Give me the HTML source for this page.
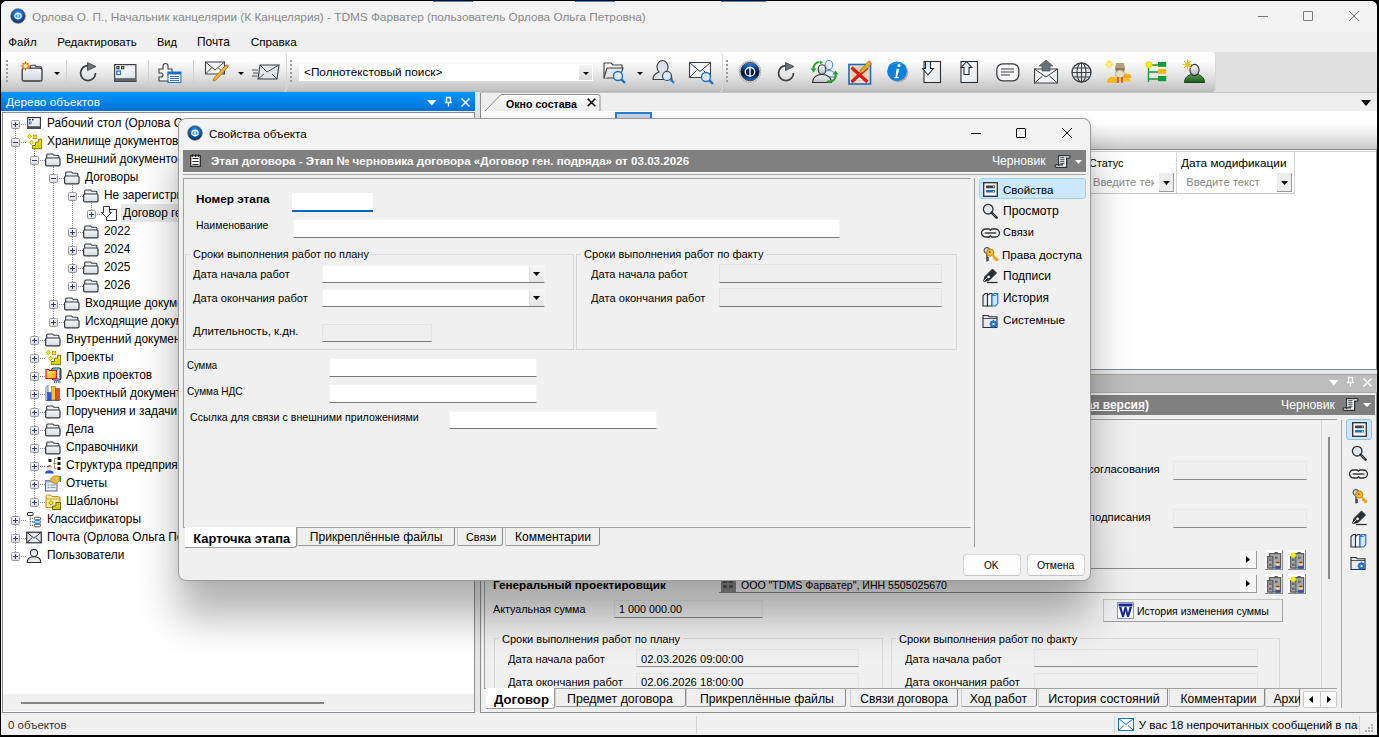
<!DOCTYPE html>
<html><head><meta charset="utf-8">
<style>
*{margin:0;padding:0;box-sizing:border-box}
html,body{width:1379px;height:737px;overflow:hidden;background:#000}
body{position:relative;font-family:"Liberation Sans",sans-serif;font-size:12px;color:#000}
.a{position:absolute}
.t{position:absolute;white-space:nowrap;line-height:14px;font-size:12px}
.b{font-weight:bold}
svg{position:absolute;overflow:visible}
</style></head><body>
<!-- window -->
<div class="a" style="left:1px;top:1px;width:1376px;height:734px;background:#f0f0f0;border-top-left-radius:6px;border-top-right-radius:6px;overflow:hidden">
</div>
<!-- title bar -->
<div class="a" style="left:1px;top:1px;width:1376px;height:31px;background:#f3f3f3;border-top-left-radius:6px;border-top-right-radius:6px"></div>
<svg style="left:10px;top:8px" width="16" height="16" viewBox="0 0 16 16"><defs><radialGradient id="gb" cx="50%" cy="40%" r="60%"><stop offset="0" stop-color="#4fb3ff"/><stop offset="0.6" stop-color="#0a5fb5"/><stop offset="1" stop-color="#041a3a"/></radialGradient></defs><circle cx="8" cy="8" r="7.3" fill="url(#gb)" stroke="#777" stroke-width="0.8"/><ellipse cx="8" cy="8" rx="3.2" ry="2.6" fill="none" stroke="#fff" stroke-width="1.1"/><line x1="8" y1="4.5" x2="8" y2="11.5" stroke="#fff" stroke-width="1.1"/></svg>
<div class="a" style="left:1258px;top:16px;width:10px;height:1px;background:#777"></div>
<div class="a" style="left:1303px;top:11px;width:10px;height:10px;border:1px solid #777;border-radius:1px"></div>
<svg style="left:1349px;top:11px" width="10" height="10"><path d="M0 0L10 10M10 0L0 10" stroke="#777" stroke-width="1"/></svg>
<div class="a" style="left:433px;top:1px;width:40px;height:1px;background:#4a86bc"></div>
<div class="a" style="left:575px;top:1px;width:40px;height:1px;background:#4a86bc"></div>
<div class="a" style="left:721px;top:1px;width:45px;height:1px;background:#4a86bc"></div>
<!-- menu -->
<!-- toolbar band -->
<div class="a" style="left:1px;top:52px;width:1376px;height:40px;background:#e1e1e1"></div>

<!-- toolbar groups -->
<div class="a" style="left:1px;top:52px;width:285px;height:40px;background:linear-gradient(#fff 0%,#fdfdfd 22%,#e4e4e4 60%,#c2c2c2 97%,#b0b0b0 100%);border-top-right-radius:3px;border-bottom-right-radius:3px"></div>
<div class="a" style="left:286px;top:52px;width:436px;height:40px;background:linear-gradient(#fff 0%,#fdfdfd 22%,#e4e4e4 60%,#c2c2c2 97%,#b0b0b0 100%);border-top-right-radius:3px;border-bottom-right-radius:3px"></div>
<div class="a" style="left:722px;top:52px;width:493px;height:40px;background:linear-gradient(#fff 0%,#fdfdfd 22%,#e4e4e4 60%,#c2c2c2 97%,#b0b0b0 100%);border-top-right-radius:3px;border-bottom-right-radius:3px"></div>
<div class="a" style="left:286px;top:54px;width:1px;height:36px;background:#d8d8d8"></div>
<div class="a" style="left:722px;top:54px;width:1px;height:36px;background:#d8d8d8"></div>
<div class="a" style="left:1215px;top:54px;width:1px;height:36px;background:#d8d8d8"></div>
<!-- grips -->
<svg style="left:6px;top:60px" width="3" height="24"><g fill="#9a9a9a"><rect x="0" y="0" width="2" height="2"/><rect x="0" y="4" width="2" height="2"/><rect x="0" y="8" width="2" height="2"/><rect x="0" y="12" width="2" height="2"/><rect x="0" y="16" width="2" height="2"/><rect x="0" y="20" width="2" height="2"/></g></svg>
<svg style="left:290px;top:60px" width="3" height="24"><g fill="#9a9a9a"><rect x="0" y="0" width="2" height="2"/><rect x="0" y="4" width="2" height="2"/><rect x="0" y="8" width="2" height="2"/><rect x="0" y="12" width="2" height="2"/><rect x="0" y="16" width="2" height="2"/><rect x="0" y="20" width="2" height="2"/></g></svg>
<svg style="left:726px;top:60px" width="3" height="24"><g fill="#9a9a9a"><rect x="0" y="0" width="2" height="2"/><rect x="0" y="4" width="2" height="2"/><rect x="0" y="8" width="2" height="2"/><rect x="0" y="12" width="2" height="2"/><rect x="0" y="16" width="2" height="2"/><rect x="0" y="20" width="2" height="2"/></g></svg>
<!-- separators -->
<div class="a" style="left:66px;top:60px;width:1px;height:26px;background:#d0d0d0"></div>
<div class="a" style="left:148px;top:60px;width:1px;height:26px;background:#d0d0d0"></div>
<div class="a" style="left:193px;top:60px;width:1px;height:26px;background:#d0d0d0"></div>
<!-- group1 icons -->
<svg style="left:21px;top:61px" width="22" height="21" viewBox="0 0 22 21"><defs><linearGradient id="nfg" x1="0" y1="0" x2="0" y2="1"><stop offset="0" stop-color="#f6f8fa"/><stop offset="1" stop-color="#d0d6de"/></linearGradient></defs><path d="M9.5 7.5V5.5a1.2 1.2 0 0 1 1.2-1.2h3.3l1.3 1.4h4.2a1.2 1.2 0 0 1 1.2 1.2V7.5" fill="#f4f6f8" stroke="#33383d" stroke-width="1.1"/><rect x="1.2" y="7.2" width="19.8" height="12.8" rx="1.6" fill="url(#nfg)" stroke="#33383d" stroke-width="1.3"/><circle cx="4.5" cy="5" r="3.4" fill="#f0a020"/><path d="M4.5 0.3v9.4M-0.2 5h9.4M1.2 1.7l6.6 6.6M7.8 1.7l-6.6 6.6" stroke="#e8501a" stroke-width="1"/><circle cx="4.5" cy="5" r="2.1" fill="#fff6a0"/></svg>
<svg style="left:54px;top:72px" width="6" height="3"><path d="M0 0h6l-3 3z" fill="#000"/></svg>
<svg style="left:79px;top:62px" width="20" height="20" viewBox="0 0 20 20"><path d="M16.5 11a7.5 7.5 0 1 1-7-7.4" fill="none" stroke="#3a3f44" stroke-width="1.7"/><path d="M8.5 0.5l8.5 4-8.5 4z" fill="#6b7178" stroke="#3a3f44" stroke-width="0.8"/></svg>
<svg style="left:114px;top:64px" width="23" height="18" viewBox="0 0 23 18"><defs><linearGradient id="wg" x1="0" y1="0" x2="1" y2="1"><stop offset="0" stop-color="#ffffff"/><stop offset="1" stop-color="#dfe3e8"/></linearGradient></defs><rect x="0.6" y="0.6" width="21.3" height="16.8" fill="url(#wg)" stroke="#3a3f44" stroke-width="1.2"/><rect x="0.6" y="14" width="21.3" height="3.4" fill="#5d6369"/><path d="M1.2 14.2h20" stroke="#9aa0a6" stroke-width="0.6"/><rect x="2.8" y="2.6" width="2.2" height="2.2" fill="none" stroke="#222" stroke-width="1"/><rect x="7.6" y="2.6" width="2.2" height="2.2" fill="none" stroke="#222" stroke-width="1"/><rect x="2.8" y="7" width="3.6" height="3.6" fill="#fff" stroke="#1a7ae0" stroke-width="1.3"/></svg>
<svg style="left:158px;top:61px" width="24" height="22" viewBox="0 0 24 22"><path d="M1 8h4v-3a2.5 2.5 0 0 1 5 0v3h4v4h-2a2 2 0 0 0 0 4h2v4h-13v-4h2a2 2 0 0 0 0-4h-2z" fill="#f0f2f4" stroke="#3a3f44" stroke-width="1.1"/><rect x="10" y="11" width="13" height="10.5" fill="#fff" stroke="#1b6fc7"/><rect x="10" y="11" width="13" height="2.5" fill="#1b6fc7"/><path d="M12 15.5h9M12 17.5h9M12 19.5h9" stroke="#1b6fc7" stroke-width="0.9"/></svg>
<svg style="left:205px;top:61px" width="24" height="22" viewBox="0 0 24 22"><path d="M0.5 1h19v12h-19z" fill="#f4f5f6" stroke="#3a3f44" stroke-width="1.1"/><path d="M0.5 1l9.5 8 9.5-8M0.5 13l6-6M19.5 13l-6-6" fill="none" stroke="#3a3f44" stroke-width="1"/><path d="M21 4l2 2-12 13-3 1 1-3z" fill="#f2b429" stroke="#a26a10" stroke-width="0.7"/><path d="M21 4l2 2 1-1-2-2z" fill="#e8709a"/></svg>
<svg style="left:238px;top:72px" width="6" height="3"><path d="M0 0h6l-3 3z" fill="#000"/></svg>
<svg style="left:252px;top:64px" width="28" height="16" viewBox="0 0 28 16"><path d="M8 1h19l-2 14h-19z" fill="#e1e6ec" stroke="#3a3f44" stroke-width="1.1"/><path d="M8 1l7 7 12-7M6 15l6-5M25 15l-5-5" fill="none" stroke="#3a3f44" stroke-width="0.9"/><path d="M0 6h6M1 9h5M0 12h5" stroke="#3a3f44" stroke-width="0.9"/></svg>
<!-- search combo -->
<div class="a" style="left:299px;top:64px;width:294px;height:17px;background:#fff"></div>
<div class="a" style="left:579px;top:65px;width:13px;height:15px;background:linear-gradient(#f4f4f4,#d6d6d6);"></div>
<svg style="left:583px;top:72px" width="6" height="3"><path d="M0 0h6l-3 3z" fill="#000"/></svg>
<!-- group2 icons -->
<svg style="left:603px;top:61px" width="26" height="22" viewBox="0 0 26 22"><path d="M1 2h7l2 2h9v3M1 2v15h10" fill="none" stroke="#3a3f44" stroke-width="1.1"/><path d="M1 17l3-10h16l-2 6" fill="#e1e6ec" stroke="#3a3f44" stroke-width="1.1"/><circle cx="15" cy="15" r="4.5" fill="#dfe6ee" stroke="#1a72c8" stroke-width="1.3"/><path d="M18.2 18.2l3.8 3.8" stroke="#1a72c8" stroke-width="2.4"/></svg>
<svg style="left:637px;top:72px" width="6" height="3"><path d="M0 0h6l-3 3z" fill="#000"/></svg>
<svg style="left:652px;top:60px" width="24" height="24" viewBox="0 0 24 24"><path d="M1 19.5c0-4 3-6.5 6-7.5a5.5 6.5 0 1 1 7 0c3 1 6 3.5 6 7.5z" fill="#dde2e8" stroke="#3a3f44" stroke-width="1.1"/><circle cx="15" cy="16" r="4.5" fill="#d7ecfb" stroke="#3a3f44" stroke-width="1.2"/><path d="M18 19l4 4" stroke="#1a7ae0" stroke-width="2.2"/></svg>
<svg style="left:689px;top:62px" width="26" height="22" viewBox="0 0 26 22"><path d="M0.5 0.5h21v15h-21z" fill="#f4f5f6" stroke="#3a3f44" stroke-width="1.1"/><path d="M0.5 0.5l10.5 9 10.5-9M0.5 15.5l7-7M21.5 15.5l-7-7" fill="none" stroke="#3a3f44" stroke-width="1"/><circle cx="17" cy="15" r="4.5" fill="#dfe6ee" stroke="#1a72c8" stroke-width="1.3"/><path d="M20.2 18.2l3.8 3.8" stroke="#1a72c8" stroke-width="2.4"/></svg>
<!-- group3 icons -->
<svg style="left:738px;top:60px" width="24" height="24" viewBox="0 0 24 24"><defs><linearGradient id="gb3" x1="0" y1="0" x2="0" y2="1"><stop offset="0" stop-color="#2a8ae8"/><stop offset="0.35" stop-color="#0a3a80"/><stop offset="0.6" stop-color="#020a20"/><stop offset="1" stop-color="#1a70d0"/></linearGradient></defs><circle cx="12" cy="11.6" r="10.8" fill="#d8d8d8" stroke="#8a8a8a" stroke-width="0.8" stroke-dasharray="1.5 1"/><circle cx="12" cy="11.6" r="9.2" fill="url(#gb3)" stroke="#303030" stroke-width="0.8"/><ellipse cx="12" cy="11.8" rx="4.8" ry="4.3" fill="none" stroke="#e8eef4" stroke-width="1.4"/><line x1="12" y1="6.5" x2="12" y2="17" stroke="#e8eef4" stroke-width="1.5"/></svg>
<svg style="left:777px;top:62px" width="20" height="20" viewBox="0 0 20 20"><path d="M16.5 11a7.5 7.5 0 1 1-7-7.4" fill="none" stroke="#3a3f44" stroke-width="1.7"/><path d="M8.5 0.5l8.5 4-8.5 4z" fill="#6b7178" stroke="#3a3f44" stroke-width="0.8"/></svg>
<svg style="left:810px;top:59px" width="27" height="26" viewBox="0 0 27 26"><defs><linearGradient id="ug2" x1="0" y1="0" x2="0" y2="1"><stop offset="0" stop-color="#f4f6f8"/><stop offset="1" stop-color="#b8c0c8"/></linearGradient></defs><ellipse cx="19" cy="6" rx="3.8" ry="4.6" fill="#e8f0fa" stroke="#3a80d0" stroke-width="1"/><path d="M13 18c0-4 3-6.5 6-6.5s7 2.5 7 6.5z" fill="#e8f0fa" stroke="#3a80d0" stroke-width="1"/><ellipse cx="12" cy="10.5" rx="3.8" ry="4.8" fill="url(#ug2)" stroke="#2a2f33" stroke-width="1.1"/><path d="M2.5 23.5c0-5 4-8 9.5-8s9.5 3 9.5 8z" fill="url(#ug2)" stroke="#2a2f33" stroke-width="1.1"/><path d="M3.5 10.5a6.5 6.5 0 0 1 6-7.5" fill="none" stroke="#2aa02a" stroke-width="2"/><path d="M0.5 9.5h6l-3 4z" fill="#2aa02a"/><path d="M10 1.5l3 2-3 2z" fill="#2aa02a"/><path d="M25.5 15a6.5 6.5 0 0 1-6 8" fill="none" stroke="#2aa02a" stroke-width="2"/><path d="M22.5 15.5h6l-3-4z" fill="#2aa02a"/><path d="M19.5 24.5l-3-2 3-2z" fill="#2aa02a"/></svg>
<svg style="left:848px;top:60px" width="24" height="25" viewBox="0 0 24 25"><rect x="1" y="4.5" width="21.5" height="19.5" fill="#e8e0c0" stroke="#1a6ac0" stroke-width="1.6"/><rect x="4" y="7" width="15.5" height="14" fill="#d8d0b0"/><path d="M8 16h8v4h-8z" fill="#fff" opacity="0.7"/><path d="M3.5 7.5l16 14.5M19.5 7.5l-16 14.5" stroke="#e01818" stroke-width="3.2"/><path d="M20.5 1l3 3-8.5 8.5-3.5 1 1-3.5z" fill="#f2a828" stroke="#7a5010" stroke-width="0.6"/><path d="M20.5 1l3 3 0.8-0.8-3-3z" fill="#e87aa0"/></svg>
<svg style="left:886px;top:60px" width="24" height="24" viewBox="0 0 24 24"><circle cx="12.3" cy="12.3" r="10" fill="#6a6a6a" opacity="0.5"/><circle cx="11" cy="11.3" r="9.8" fill="#0a80dc"/><path d="M6 5a8 6 0 0 1 10-1" fill="none" stroke="#5ab0f0" stroke-width="1" opacity="0.6"/><circle cx="13" cy="5.6" r="1.5" fill="#fff"/><path d="M10.5 8.8h3l-2.4 8.2h1.8l-0.4 1.3h-4.4l0.4-1.3h1z" fill="#fff"/></svg>
<svg style="left:922px;top:61px" width="20" height="22" viewBox="0 0 20 22"><defs><linearGradient id="dg2" x1="0" y1="0" x2="1" y2="1"><stop offset="0" stop-color="#ffffff"/><stop offset="1" stop-color="#e4e6e8"/></linearGradient><linearGradient id="ag" x1="0" y1="0" x2="0" y2="1"><stop offset="0" stop-color="#d0e4fa"/><stop offset="1" stop-color="#ffffff"/></linearGradient></defs><rect x="2" y="0.5" width="16.5" height="21" fill="url(#dg2)" stroke="#2a2f33" stroke-width="1.1"/><path d="M3.5 0.5v7h-2.8l5.3 6.5 5.3-6.5h-2.8v-7z" fill="url(#ag)" stroke="#2a2f33" stroke-width="1.1"/></svg>
<svg style="left:960px;top:61px" width="20" height="22" viewBox="0 0 20 22"><rect x="1" y="0.5" width="16.5" height="21" fill="url(#dg2)" stroke="#2a2f33" stroke-width="1.1"/><path d="M4 13.5v-7h-2.8l5.3-6 5.3 6h-2.8v7z" fill="url(#ag)" stroke="#2a2f33" stroke-width="1.1"/></svg>
<svg style="left:996px;top:63px" width="24" height="19" viewBox="0 0 24 19"><rect x="0.8" y="0.8" width="22" height="17" rx="6" fill="#f9f9f9" stroke="#3a3f44" stroke-width="1.3"/><path d="M5 6h13M5 9h13M5 12h9" stroke="#3a3f44" stroke-width="1.1"/></svg>
<svg style="left:1034px;top:60px" width="24" height="24" viewBox="0 0 24 24"><path d="M0.5 9h23v14h-23z" fill="#f4f5f6" stroke="#3a3f44" stroke-width="1.1"/><path d="M0.5 9l11.5 8 11.5-8M0.5 23l8-7M23.5 23l-8-7" fill="none" stroke="#3a3f44" stroke-width="1"/><path d="M8 11v-5h-3l7-6 7 6h-3v5z" fill="#6b7178" stroke="#3a3f44" stroke-width="0.6"/></svg>
<svg style="left:1071px;top:62px" width="21" height="21" viewBox="0 0 21 21"><circle cx="10.5" cy="10.5" r="9.5" fill="none" stroke="#3a3f44" stroke-width="1.3"/><ellipse cx="10.5" cy="10.5" rx="4.5" ry="9.5" fill="none" stroke="#3a3f44" stroke-width="1.1"/><path d="M1 10.5h19M2.5 6h16M2.5 15h16M10.5 1v19" stroke="#3a3f44" stroke-width="1.1"/></svg>
<svg style="left:1106px;top:59px" width="28" height="26" viewBox="0 0 28 26"><path d="M1 22c1-4 5-5 8-4s4 4 3 6h-11z" fill="#f8b820"/><path d="M13 21c1-3 4-4 7-3.5s5 3 4 5h-11z" fill="#f8c030"/><path d="M17 17c1-3 4-3 6-2s3 3 2 4h-8z" fill="#f8a818"/><path d="M9 9h10l-1 4h-8z" fill="#8a7a5a"/><path d="M10 4h8l1 5h-10z" fill="#b0a080"/><ellipse cx="14" cy="15" rx="4.5" ry="4" fill="#e8dcc0" stroke="#9a8a6a" stroke-width="0.6"/><path d="M12 18v6M16 18v6" stroke="#d02020" stroke-width="1.2"/><path d="M3 1v9M-0.5 5.5h8M0.5 2.5l5 5M5.5 2.5l-5 5" stroke="#f8e020" stroke-width="1.3"/><circle cx="3" cy="5.5" r="1.8" fill="#fff8a0"/></svg>
<svg style="left:1144px;top:60px" width="24" height="24" viewBox="0 0 24 24"><path d="M4.5 5v17M4.5 5h10M4.5 12h10M4.5 19h10" stroke="#1a9a2a" stroke-width="1.4" fill="none"/><circle cx="5" cy="4.8" r="3.3" fill="#f6ea10" stroke="#d0c000" stroke-width="0.5"/><rect x="14" y="2" width="8.2" height="4.8" fill="#109a3a"/><rect x="14" y="9" width="8.2" height="4.8" fill="#f0b818"/><rect x="14" y="16" width="8.2" height="5.2" fill="#109a3a"/></svg>
<svg style="left:1182px;top:59px" width="26" height="25" viewBox="0 0 26 25"><defs><linearGradient id="pg1" x1="0" y1="0" x2="0" y2="1"><stop offset="0" stop-color="#fafbfc"/><stop offset="1" stop-color="#aeb4ba"/></linearGradient><linearGradient id="pg2" x1="0" y1="0" x2="0" y2="1"><stop offset="0" stop-color="#5aa05a"/><stop offset="1" stop-color="#1a5a1a"/></linearGradient></defs><path d="M2.5 23.5c0-5 4-8.5 10-8.5s10 3.5 10 8.5z" fill="url(#pg2)" stroke="#1a3a1a" stroke-width="1"/><ellipse cx="12.5" cy="11" rx="4.6" ry="5.6" fill="url(#pg1)" stroke="#2a2f33" stroke-width="1.1"/><circle cx="5.5" cy="5.5" r="2.6" fill="#f8d820"/><path d="M5.5 0.5v10M0.5 5.5h10M2 2l7 7M9 2l-7 7" stroke="#f0c010" stroke-width="1"/></svg>

<div class="t" style="left:32px;top:9.7px;font-size:11.79px;color:#8a8a8a">Орлова О. П., Начальник канцелярии (К Канцелярия) - TDMS Фарватер (пользователь Орлова Ольга Петровна)</div>
<div class="t" style="left:8.3px;top:34.7px;font-size:11.55px">Файл</div>
<div class="t" style="left:57.3px;top:34.7px;font-size:11.49px">Редактировать</div>
<div class="t" style="left:157px;top:34.7px;font-size:11.2px;transform:scaleX(0.987);transform-origin:0 50%">Вид</div>
<div class="t" style="left:197px;top:34.7px;font-size:11.88px">Почта</div>
<div class="t" style="left:250.7px;top:34.7px;font-size:11.73px">Справка</div>
<div class="t" style="left:304px;top:65.3px;font-size:11.8px">&lt;Полнотекстовый поиск&gt;</div>
<div class="a" style="left:1px;top:92px;width:474px;height:19px;background:linear-gradient(#0096fc,#0084ea 50%,#0070d2)"></div>
<svg style="left:427px;top:100px" width="10" height="6"><path d="M0 0h9.5l-4.75 5.5z" fill="#fff"/></svg>
<svg style="left:444px;top:97px" width="9" height="10"><path d="M2 0.5h5M2.5 0.5v5M6.5 0.5v5M1 5.5h7M4.5 5.5v4" stroke="#fff" stroke-width="1.3" fill="none"/></svg>
<svg style="left:461px;top:98px" width="9" height="9"><path d="M0.5 0.5l8 8M8.5 0.5l-8 8" stroke="#fff" stroke-width="1.5"/></svg>
<div class="a" style="left:2px;top:112px;width:473px;height:601px;background:#fff;border:1px solid #8a8f96"></div>
<div class="a" style="left:3px;top:694px;width:471px;height:17px;background:#f0f0f0"></div>
<div class="a" style="left:21px;top:702px;width:303px;height:2px;background:#858585"></div>
<svg style="left:0;top:0" width="1" height="1"><defs><linearGradient id="fg" x1="0" y1="0" x2="0" y2="1"><stop offset="0" stop-color="#f7f8fa"/><stop offset="1" stop-color="#d5dae0"/></linearGradient><linearGradient id="dg" x1="0" y1="0" x2="1" y2="1"><stop offset="0" stop-color="#ffffff"/><stop offset="1" stop-color="#dde2e8"/></linearGradient><linearGradient id="yg" x1="0" y1="0" x2="1" y2="1"><stop offset="0" stop-color="#fff8c0"/><stop offset="0.5" stop-color="#f8d040"/><stop offset="1" stop-color="#f0a000"/></linearGradient><linearGradient id="ug" x1="0" y1="0" x2="0" y2="1"><stop offset="0" stop-color="#d8dce0"/><stop offset="1" stop-color="#f4f5f6"/></linearGradient><linearGradient id="bg9" x1="0" y1="0" x2="0" y2="1"><stop offset="0" stop-color="#fff"/><stop offset="1" stop-color="#d8d8d8"/></linearGradient></defs></svg>
<div class="a" style="left:15px;top:129px;width:1px;height:427px;background:repeating-linear-gradient(#8a8a8a 0 1px,transparent 1px 2px)"></div>
<div class="a" style="left:34px;top:147px;width:1px;height:355px;background:repeating-linear-gradient(#8a8a8a 0 1px,transparent 1px 2px)"></div>
<div class="a" style="left:53px;top:165px;width:1px;height:157px;background:repeating-linear-gradient(#8a8a8a 0 1px,transparent 1px 2px)"></div>
<div class="a" style="left:72px;top:183px;width:1px;height:103px;background:repeating-linear-gradient(#8a8a8a 0 1px,transparent 1px 2px)"></div>
<div class="a" style="left:91px;top:201px;width:1px;height:13px;background:repeating-linear-gradient(#8a8a8a 0 1px,transparent 1px 2px)"></div>
<div class="a" style="left:121px;top:204px;width:120px;height:18px;background:#e8e8e8"></div>
<div class="a" style="left:21px;top:124px;width:6px;height:1px;background:repeating-linear-gradient(90deg,#8a8a8a 0 1px,transparent 1px 2px)"></div>
<svg style="left:11px;top:120px" width="9" height="9"><rect x="0.5" y="0.5" width="8" height="8" rx="1" fill="url(#bg9)" stroke="#9a9a9a"/><path d="M2 4.5h5" stroke="#2a3a8a" stroke-width="1"/><path d="M4.5 2v5" stroke="#2a3a8a" stroke-width="1"/></svg>
<svg style="left:26px;top:116px" width="16" height="16" viewBox="0 0 16 16"><rect x="1.7" y="1.5" width="12.7" height="10.8" fill="url(#dg)" stroke="#2e3338" stroke-width="1.1"/><rect x="1.7" y="10.3" width="12.7" height="2" fill="#3a3f44"/><path d="M2.5 11.1h11" stroke="#7a7f84" stroke-width="0.5"/><rect x="3" y="2.8" width="1.6" height="1.6" fill="#111"/><rect x="6" y="2.8" width="1.6" height="1.6" fill="#111"/><rect x="3" y="5.6" width="2.6" height="2.6" fill="#1a7ae0"/><rect x="3.9" y="6.5" width="0.9" height="0.9" fill="#fff"/></svg>
<div class="a" style="left:21px;top:142px;width:6px;height:1px;background:repeating-linear-gradient(90deg,#8a8a8a 0 1px,transparent 1px 2px)"></div>
<svg style="left:11px;top:138px" width="9" height="9"><rect x="0.5" y="0.5" width="8" height="8" rx="1" fill="url(#bg9)" stroke="#9a9a9a"/><path d="M2 4.5h5" stroke="#2a3a8a" stroke-width="1"/></svg>
<svg style="left:26px;top:134px" width="16" height="16" viewBox="0 0 16 16"><path d="M3.4 0.3l2.2 2.2-2.2 2.2-2.2-2.2z" fill="#f6ee00" stroke="#8a8400" stroke-width="0.6"/><rect x="7.5" y="1.2" width="3.2" height="3.4" fill="#f6ee00" stroke="#d08a00" stroke-width="0.8"/><path d="M5.5 6.2l2.2 2.2-2.2 2.2-2.2-2.2z" fill="#f6ee00" stroke="#8a8400" stroke-width="0.6"/><path d="M6.4 14.7V11.5H9.5V8.2H12.6V5.2H15.6V14.7Z" fill="#f6ee00" stroke="#6a6400" stroke-width="0.9"/><path d="M6.5 13.1h9M9.5 11.5h6M12.6 9.8h3M9.5 11.5v3.2M12.6 8.2v6.5" stroke="#b0a800" stroke-width="0.5"/></svg>
<div class="a" style="left:40px;top:160px;width:6px;height:1px;background:repeating-linear-gradient(90deg,#8a8a8a 0 1px,transparent 1px 2px)"></div>
<svg style="left:30px;top:156px" width="9" height="9"><rect x="0.5" y="0.5" width="8" height="8" rx="1" fill="url(#bg9)" stroke="#9a9a9a"/><path d="M2 4.5h5" stroke="#2a3a8a" stroke-width="1"/></svg>
<svg style="left:45px;top:152px" width="16" height="16" viewBox="0 0 16 16"><path d="M1.7 6.5V3a1 1 0 0 1 1-1h5l1.2 1.3h4a1 1 0 0 1 1 1V6.5" fill="#eef1f4" stroke="#33383d" stroke-width="1.1"/><rect x="0.6" y="6" width="14.4" height="7.8" rx="1.3" fill="url(#fg)" stroke="#33383d" stroke-width="1.2"/></svg>
<div class="a" style="left:59px;top:178px;width:6px;height:1px;background:repeating-linear-gradient(90deg,#8a8a8a 0 1px,transparent 1px 2px)"></div>
<svg style="left:49px;top:174px" width="9" height="9"><rect x="0.5" y="0.5" width="8" height="8" rx="1" fill="url(#bg9)" stroke="#9a9a9a"/><path d="M2 4.5h5" stroke="#2a3a8a" stroke-width="1"/></svg>
<svg style="left:64px;top:170px" width="16" height="16" viewBox="0 0 16 16"><path d="M1.7 6.5V3a1 1 0 0 1 1-1h5l1.2 1.3h4a1 1 0 0 1 1 1V6.5" fill="#eef1f4" stroke="#33383d" stroke-width="1.1"/><rect x="0.6" y="6" width="14.4" height="7.8" rx="1.3" fill="url(#fg)" stroke="#33383d" stroke-width="1.2"/></svg>
<div class="a" style="left:78px;top:196px;width:6px;height:1px;background:repeating-linear-gradient(90deg,#8a8a8a 0 1px,transparent 1px 2px)"></div>
<svg style="left:68px;top:192px" width="9" height="9"><rect x="0.5" y="0.5" width="8" height="8" rx="1" fill="url(#bg9)" stroke="#9a9a9a"/><path d="M2 4.5h5" stroke="#2a3a8a" stroke-width="1"/></svg>
<svg style="left:83px;top:188px" width="16" height="16" viewBox="0 0 16 16"><path d="M1.7 6.5V3a1 1 0 0 1 1-1h5l1.2 1.3h4a1 1 0 0 1 1 1V6.5" fill="#eef1f4" stroke="#33383d" stroke-width="1.1"/><rect x="0.6" y="6" width="14.4" height="7.8" rx="1.3" fill="url(#fg)" stroke="#33383d" stroke-width="1.2"/></svg>
<div class="a" style="left:97px;top:214px;width:6px;height:1px;background:repeating-linear-gradient(90deg,#8a8a8a 0 1px,transparent 1px 2px)"></div>
<svg style="left:87px;top:210px" width="9" height="9"><rect x="0.5" y="0.5" width="8" height="8" rx="1" fill="url(#bg9)" stroke="#9a9a9a"/><path d="M2 4.5h5" stroke="#2a3a8a" stroke-width="1"/><path d="M4.5 2v5" stroke="#2a3a8a" stroke-width="1"/></svg>
<svg style="left:102px;top:206px" width="16" height="16" viewBox="0 0 16 16"><path d="M4.5 3.5h10v11h-10z" fill="#fff" stroke="#2e3338"/><path d="M1.5 0.5h6v6h2l-5 5-5-5h2z" fill="#fff" stroke="#2e3338"/></svg>
<div class="a" style="left:78px;top:232px;width:6px;height:1px;background:repeating-linear-gradient(90deg,#8a8a8a 0 1px,transparent 1px 2px)"></div>
<svg style="left:68px;top:228px" width="9" height="9"><rect x="0.5" y="0.5" width="8" height="8" rx="1" fill="url(#bg9)" stroke="#9a9a9a"/><path d="M2 4.5h5" stroke="#2a3a8a" stroke-width="1"/><path d="M4.5 2v5" stroke="#2a3a8a" stroke-width="1"/></svg>
<svg style="left:83px;top:224px" width="16" height="16" viewBox="0 0 16 16"><path d="M1.7 6.5V3a1 1 0 0 1 1-1h5l1.2 1.3h4a1 1 0 0 1 1 1V6.5" fill="#eef1f4" stroke="#33383d" stroke-width="1.1"/><rect x="0.6" y="6" width="14.4" height="7.8" rx="1.3" fill="url(#fg)" stroke="#33383d" stroke-width="1.2"/></svg>
<div class="a" style="left:78px;top:250px;width:6px;height:1px;background:repeating-linear-gradient(90deg,#8a8a8a 0 1px,transparent 1px 2px)"></div>
<svg style="left:68px;top:246px" width="9" height="9"><rect x="0.5" y="0.5" width="8" height="8" rx="1" fill="url(#bg9)" stroke="#9a9a9a"/><path d="M2 4.5h5" stroke="#2a3a8a" stroke-width="1"/><path d="M4.5 2v5" stroke="#2a3a8a" stroke-width="1"/></svg>
<svg style="left:83px;top:242px" width="16" height="16" viewBox="0 0 16 16"><path d="M1.7 6.5V3a1 1 0 0 1 1-1h5l1.2 1.3h4a1 1 0 0 1 1 1V6.5" fill="#eef1f4" stroke="#33383d" stroke-width="1.1"/><rect x="0.6" y="6" width="14.4" height="7.8" rx="1.3" fill="url(#fg)" stroke="#33383d" stroke-width="1.2"/></svg>
<div class="a" style="left:78px;top:268px;width:6px;height:1px;background:repeating-linear-gradient(90deg,#8a8a8a 0 1px,transparent 1px 2px)"></div>
<svg style="left:68px;top:264px" width="9" height="9"><rect x="0.5" y="0.5" width="8" height="8" rx="1" fill="url(#bg9)" stroke="#9a9a9a"/><path d="M2 4.5h5" stroke="#2a3a8a" stroke-width="1"/><path d="M4.5 2v5" stroke="#2a3a8a" stroke-width="1"/></svg>
<svg style="left:83px;top:260px" width="16" height="16" viewBox="0 0 16 16"><path d="M1.7 6.5V3a1 1 0 0 1 1-1h5l1.2 1.3h4a1 1 0 0 1 1 1V6.5" fill="#eef1f4" stroke="#33383d" stroke-width="1.1"/><rect x="0.6" y="6" width="14.4" height="7.8" rx="1.3" fill="url(#fg)" stroke="#33383d" stroke-width="1.2"/></svg>
<div class="a" style="left:78px;top:286px;width:6px;height:1px;background:repeating-linear-gradient(90deg,#8a8a8a 0 1px,transparent 1px 2px)"></div>
<svg style="left:68px;top:282px" width="9" height="9"><rect x="0.5" y="0.5" width="8" height="8" rx="1" fill="url(#bg9)" stroke="#9a9a9a"/><path d="M2 4.5h5" stroke="#2a3a8a" stroke-width="1"/><path d="M4.5 2v5" stroke="#2a3a8a" stroke-width="1"/></svg>
<svg style="left:83px;top:278px" width="16" height="16" viewBox="0 0 16 16"><path d="M1.7 6.5V3a1 1 0 0 1 1-1h5l1.2 1.3h4a1 1 0 0 1 1 1V6.5" fill="#eef1f4" stroke="#33383d" stroke-width="1.1"/><rect x="0.6" y="6" width="14.4" height="7.8" rx="1.3" fill="url(#fg)" stroke="#33383d" stroke-width="1.2"/></svg>
<div class="a" style="left:59px;top:304px;width:6px;height:1px;background:repeating-linear-gradient(90deg,#8a8a8a 0 1px,transparent 1px 2px)"></div>
<svg style="left:49px;top:300px" width="9" height="9"><rect x="0.5" y="0.5" width="8" height="8" rx="1" fill="url(#bg9)" stroke="#9a9a9a"/><path d="M2 4.5h5" stroke="#2a3a8a" stroke-width="1"/><path d="M4.5 2v5" stroke="#2a3a8a" stroke-width="1"/></svg>
<svg style="left:64px;top:296px" width="16" height="16" viewBox="0 0 16 16"><path d="M1.7 6.5V3a1 1 0 0 1 1-1h5l1.2 1.3h4a1 1 0 0 1 1 1V6.5" fill="#eef1f4" stroke="#33383d" stroke-width="1.1"/><rect x="0.6" y="6" width="14.4" height="7.8" rx="1.3" fill="url(#fg)" stroke="#33383d" stroke-width="1.2"/></svg>
<div class="a" style="left:59px;top:322px;width:6px;height:1px;background:repeating-linear-gradient(90deg,#8a8a8a 0 1px,transparent 1px 2px)"></div>
<svg style="left:49px;top:318px" width="9" height="9"><rect x="0.5" y="0.5" width="8" height="8" rx="1" fill="url(#bg9)" stroke="#9a9a9a"/><path d="M2 4.5h5" stroke="#2a3a8a" stroke-width="1"/><path d="M4.5 2v5" stroke="#2a3a8a" stroke-width="1"/></svg>
<svg style="left:64px;top:314px" width="16" height="16" viewBox="0 0 16 16"><path d="M1.7 6.5V3a1 1 0 0 1 1-1h5l1.2 1.3h4a1 1 0 0 1 1 1V6.5" fill="#eef1f4" stroke="#33383d" stroke-width="1.1"/><rect x="0.6" y="6" width="14.4" height="7.8" rx="1.3" fill="url(#fg)" stroke="#33383d" stroke-width="1.2"/></svg>
<div class="a" style="left:40px;top:340px;width:6px;height:1px;background:repeating-linear-gradient(90deg,#8a8a8a 0 1px,transparent 1px 2px)"></div>
<svg style="left:30px;top:336px" width="9" height="9"><rect x="0.5" y="0.5" width="8" height="8" rx="1" fill="url(#bg9)" stroke="#9a9a9a"/><path d="M2 4.5h5" stroke="#2a3a8a" stroke-width="1"/><path d="M4.5 2v5" stroke="#2a3a8a" stroke-width="1"/></svg>
<svg style="left:45px;top:332px" width="16" height="16" viewBox="0 0 16 16"><path d="M1.7 6.5V3a1 1 0 0 1 1-1h5l1.2 1.3h4a1 1 0 0 1 1 1V6.5" fill="#eef1f4" stroke="#33383d" stroke-width="1.1"/><rect x="0.6" y="6" width="14.4" height="7.8" rx="1.3" fill="url(#fg)" stroke="#33383d" stroke-width="1.2"/></svg>
<div class="a" style="left:40px;top:358px;width:6px;height:1px;background:repeating-linear-gradient(90deg,#8a8a8a 0 1px,transparent 1px 2px)"></div>
<svg style="left:30px;top:354px" width="9" height="9"><rect x="0.5" y="0.5" width="8" height="8" rx="1" fill="url(#bg9)" stroke="#9a9a9a"/><path d="M2 4.5h5" stroke="#2a3a8a" stroke-width="1"/><path d="M4.5 2v5" stroke="#2a3a8a" stroke-width="1"/></svg>
<svg style="left:45px;top:350px" width="16" height="16" viewBox="0 0 16 16"><path d="M3.4 0.3l2.2 2.2-2.2 2.2-2.2-2.2z" fill="#f6ee00" stroke="#8a8400" stroke-width="0.6"/><rect x="7.5" y="1.2" width="3.2" height="3.4" fill="#f6ee00" stroke="#d08a00" stroke-width="0.8"/><path d="M5.5 6.2l2.2 2.2-2.2 2.2-2.2-2.2z" fill="#f6ee00" stroke="#8a8400" stroke-width="0.6"/><path d="M6.4 14.7V11.5H9.5V8.2H12.6V5.2H15.6V14.7Z" fill="#f6ee00" stroke="#6a6400" stroke-width="0.9"/><path d="M6.5 13.1h9M9.5 11.5h6M12.6 9.8h3M9.5 11.5v3.2M12.6 8.2v6.5" stroke="#b0a800" stroke-width="0.5"/></svg>
<div class="a" style="left:40px;top:376px;width:6px;height:1px;background:repeating-linear-gradient(90deg,#8a8a8a 0 1px,transparent 1px 2px)"></div>
<svg style="left:30px;top:372px" width="9" height="9"><rect x="0.5" y="0.5" width="8" height="8" rx="1" fill="url(#bg9)" stroke="#9a9a9a"/><path d="M2 4.5h5" stroke="#2a3a8a" stroke-width="1"/><path d="M4.5 2v5" stroke="#2a3a8a" stroke-width="1"/></svg>
<svg style="left:45px;top:368px" width="16" height="16" viewBox="0 0 16 16"><rect x="6.8" y="0" width="9" height="12" rx="2" fill="#fff" stroke="#111" stroke-width="1.2"/><rect x="8" y="1.3" width="6.6" height="9.4" rx="1.2" fill="none" stroke="#2a9ae0" stroke-width="1"/><path d="M9 14h7" stroke="#1a4a9a" stroke-width="1.6" stroke-dasharray="1.2 0.6"/><path d="M1 10.5V1.5h2.5l1 1h7v8z" fill="url(#yg)" stroke="#ff1010" stroke-width="1.2"/></svg>
<div class="a" style="left:40px;top:394px;width:6px;height:1px;background:repeating-linear-gradient(90deg,#8a8a8a 0 1px,transparent 1px 2px)"></div>
<svg style="left:30px;top:390px" width="9" height="9"><rect x="0.5" y="0.5" width="8" height="8" rx="1" fill="url(#bg9)" stroke="#9a9a9a"/><path d="M2 4.5h5" stroke="#2a3a8a" stroke-width="1"/><path d="M4.5 2v5" stroke="#2a3a8a" stroke-width="1"/></svg>
<svg style="left:45px;top:386px" width="16" height="16" viewBox="0 0 16 16"><path d="M0.8 14.5V1.5l2.2-2V12.5" fill="#dfe8f4" stroke="#4a6a9a" stroke-width="0.8"/><path d="M0.8 14.5h13.5l1.5-1.5" fill="none" stroke="#4a6a9a" stroke-width="1"/><rect x="2.6" y="6.5" width="3.8" height="7.5" fill="#2a5ad8" stroke="#1a3a8a" stroke-width="0.5"/><rect x="6.4" y="0.5" width="4" height="13.5" fill="#f2c81a" stroke="#8a7a20" stroke-width="0.6"/><rect x="10.4" y="2.5" width="4" height="11.5" fill="#e0502a" stroke="#8a3010" stroke-width="0.6"/></svg>
<div class="a" style="left:40px;top:412px;width:6px;height:1px;background:repeating-linear-gradient(90deg,#8a8a8a 0 1px,transparent 1px 2px)"></div>
<svg style="left:30px;top:408px" width="9" height="9"><rect x="0.5" y="0.5" width="8" height="8" rx="1" fill="url(#bg9)" stroke="#9a9a9a"/><path d="M2 4.5h5" stroke="#2a3a8a" stroke-width="1"/><path d="M4.5 2v5" stroke="#2a3a8a" stroke-width="1"/></svg>
<svg style="left:45px;top:404px" width="16" height="16" viewBox="0 0 16 16"><path d="M1.7 6.5V3a1 1 0 0 1 1-1h5l1.2 1.3h4a1 1 0 0 1 1 1V6.5" fill="#eef1f4" stroke="#33383d" stroke-width="1.1"/><rect x="0.6" y="6" width="14.4" height="7.8" rx="1.3" fill="url(#fg)" stroke="#33383d" stroke-width="1.2"/></svg>
<div class="a" style="left:40px;top:430px;width:6px;height:1px;background:repeating-linear-gradient(90deg,#8a8a8a 0 1px,transparent 1px 2px)"></div>
<svg style="left:30px;top:426px" width="9" height="9"><rect x="0.5" y="0.5" width="8" height="8" rx="1" fill="url(#bg9)" stroke="#9a9a9a"/><path d="M2 4.5h5" stroke="#2a3a8a" stroke-width="1"/><path d="M4.5 2v5" stroke="#2a3a8a" stroke-width="1"/></svg>
<svg style="left:45px;top:422px" width="16" height="16" viewBox="0 0 16 16"><path d="M1.7 6.5V3a1 1 0 0 1 1-1h5l1.2 1.3h4a1 1 0 0 1 1 1V6.5" fill="#eef1f4" stroke="#33383d" stroke-width="1.1"/><rect x="0.6" y="6" width="14.4" height="7.8" rx="1.3" fill="url(#fg)" stroke="#33383d" stroke-width="1.2"/></svg>
<div class="a" style="left:40px;top:448px;width:6px;height:1px;background:repeating-linear-gradient(90deg,#8a8a8a 0 1px,transparent 1px 2px)"></div>
<svg style="left:30px;top:444px" width="9" height="9"><rect x="0.5" y="0.5" width="8" height="8" rx="1" fill="url(#bg9)" stroke="#9a9a9a"/><path d="M2 4.5h5" stroke="#2a3a8a" stroke-width="1"/><path d="M4.5 2v5" stroke="#2a3a8a" stroke-width="1"/></svg>
<svg style="left:45px;top:440px" width="16" height="16" viewBox="0 0 16 16"><path d="M1.7 6.5V3a1 1 0 0 1 1-1h5l1.2 1.3h4a1 1 0 0 1 1 1V6.5" fill="#eef1f4" stroke="#33383d" stroke-width="1.1"/><rect x="0.6" y="6" width="14.4" height="7.8" rx="1.3" fill="url(#fg)" stroke="#33383d" stroke-width="1.2"/></svg>
<div class="a" style="left:40px;top:466px;width:6px;height:1px;background:repeating-linear-gradient(90deg,#8a8a8a 0 1px,transparent 1px 2px)"></div>
<svg style="left:30px;top:462px" width="9" height="9"><rect x="0.5" y="0.5" width="8" height="8" rx="1" fill="url(#bg9)" stroke="#9a9a9a"/><path d="M2 4.5h5" stroke="#2a3a8a" stroke-width="1"/><path d="M4.5 2v5" stroke="#2a3a8a" stroke-width="1"/></svg>
<svg style="left:45px;top:458px" width="16" height="16" viewBox="0 0 16 16"><rect x="3.5" y="1" width="3" height="3" fill="#111"/><rect x="12.5" y="-1" width="3" height="3" fill="#111"/><rect x="12.5" y="4" width="3" height="3" fill="#111"/><rect x="12.5" y="9" width="3" height="3" fill="#111"/><path d="M11.5 0.5h-2v10h2M8 5.5h3.5" fill="none" stroke="#9a8a5a" stroke-width="0.9"/><circle cx="4.3" cy="10" r="2.6" fill="#fde0c0"/><path d="M1.6 9.5a2.8 2.6 0 0 1 5.4-0.5c-1.2-0.6-3-0.6-5.4 0.5z" fill="#6a3a10"/><path d="M0 15.5c0-2.5 1.8-3 4.3-3s4.3 0.5 4.3 3z" fill="#1a5ae0"/><path d="M3.8 12.6h1l-0.5 2.5z" fill="#e01010"/></svg>
<div class="a" style="left:40px;top:484px;width:6px;height:1px;background:repeating-linear-gradient(90deg,#8a8a8a 0 1px,transparent 1px 2px)"></div>
<svg style="left:30px;top:480px" width="9" height="9"><rect x="0.5" y="0.5" width="8" height="8" rx="1" fill="url(#bg9)" stroke="#9a9a9a"/><path d="M2 4.5h5" stroke="#2a3a8a" stroke-width="1"/><path d="M4.5 2v5" stroke="#2a3a8a" stroke-width="1"/></svg>
<svg style="left:45px;top:476px" width="16" height="16" viewBox="0 0 16 16"><rect x="0.5" y="4.5" width="11.5" height="10.5" fill="#e6ecf4" stroke="#4a5a70" stroke-width="0.9"/><rect x="0.5" y="4.5" width="11.5" height="2" fill="#8ab0e0"/><path d="M2.5 9h2M5.5 9h5M2.5 11.5h2M5.5 11.5h5" stroke="#7a90b0" stroke-width="0.9"/><path d="M4.5 4.5l4-4.5h5.5l1 4-4 4-3-1z" fill="#f0c040" stroke="#8a6a10" stroke-width="0.6"/><path d="M5 2l5 5M7 0.8l4.5 4.5" stroke="#c09020" stroke-width="0.5"/><rect x="14.5" y="0" width="1.5" height="6" fill="#2aa040"/></svg>
<div class="a" style="left:40px;top:502px;width:6px;height:1px;background:repeating-linear-gradient(90deg,#8a8a8a 0 1px,transparent 1px 2px)"></div>
<svg style="left:30px;top:498px" width="9" height="9"><rect x="0.5" y="0.5" width="8" height="8" rx="1" fill="url(#bg9)" stroke="#9a9a9a"/><path d="M2 4.5h5" stroke="#2a3a8a" stroke-width="1"/><path d="M4.5 2v5" stroke="#2a3a8a" stroke-width="1"/></svg>
<svg style="left:45px;top:494px" width="16" height="16" viewBox="0 0 16 16"><path d="M1 13.5V2.5a1.5 1.5 0 0 1 1.5-1.5h3l1.5 1.5h6.5a1.5 1.5 0 0 1 1.5 1.5v9.5z" fill="#fbe7a0" stroke="#c08a10" stroke-width="1"/><path d="M1 5h14" stroke="#c08a10" stroke-width="0.7"/><path d="M6 6.5l2.3 2.3-2.3 2.3-2.3-2.3z" fill="#f6ee00" stroke="#6a6400" stroke-width="0.7"/><path d="M7.5 15.5v-3.5h3.5v-3.5h4.5v7z" fill="#f6ee00" stroke="#5a5a00" stroke-width="1"/><path d="M11 12v3.5M7.5 13.8h8M13.3 8.5v7M11 10.2h4.5" stroke="#9a9000" stroke-width="0.5"/></svg>
<div class="a" style="left:21px;top:520px;width:6px;height:1px;background:repeating-linear-gradient(90deg,#8a8a8a 0 1px,transparent 1px 2px)"></div>
<svg style="left:11px;top:516px" width="9" height="9"><rect x="0.5" y="0.5" width="8" height="8" rx="1" fill="url(#bg9)" stroke="#9a9a9a"/><path d="M2 4.5h5" stroke="#2a3a8a" stroke-width="1"/><path d="M4.5 2v5" stroke="#2a3a8a" stroke-width="1"/></svg>
<svg style="left:26px;top:512px" width="16" height="16" viewBox="0 0 16 16"><rect x="1.5" y="0.5" width="5.5" height="3" rx="0.5" fill="#fff" stroke="#2e3338" stroke-width="1"/><path d="M4.2 3.5v10.5M4.2 6.5h3.5M4.2 9.8h3.5M4.2 13.5h3.5" stroke="#2e3338" stroke-width="0.8" stroke-dasharray="1 0.8"/><rect x="8.5" y="5.2" width="6" height="2.6" rx="1" fill="#fff" stroke="#2e3338" stroke-width="0.9"/><rect x="8.5" y="8.6" width="6" height="2.6" rx="1" fill="#cfe4fa" stroke="#1a7ae0" stroke-width="1"/><path d="M6 9.9h2.5" stroke="#1a7ae0" stroke-width="1"/><rect x="8.5" y="12.2" width="6" height="2.6" rx="1" fill="#fff" stroke="#2e3338" stroke-width="0.9"/></svg>
<div class="a" style="left:21px;top:538px;width:6px;height:1px;background:repeating-linear-gradient(90deg,#8a8a8a 0 1px,transparent 1px 2px)"></div>
<svg style="left:11px;top:534px" width="9" height="9"><rect x="0.5" y="0.5" width="8" height="8" rx="1" fill="url(#bg9)" stroke="#9a9a9a"/><path d="M2 4.5h5" stroke="#2a3a8a" stroke-width="1"/><path d="M4.5 2v5" stroke="#2a3a8a" stroke-width="1"/></svg>
<svg style="left:26px;top:530px" width="16" height="16" viewBox="0 0 16 16"><rect x="0.7" y="2.2" width="14.6" height="10.6" fill="#e4e8ee" stroke="#2e3338" stroke-width="1.2"/><path d="M0.7 2.2l7.3 6 7.3-6M0.7 12.8l5.3-5M15.3 12.8l-5.3-5" fill="none" stroke="#2e3338" stroke-width="1"/></svg>
<div class="a" style="left:21px;top:556px;width:6px;height:1px;background:repeating-linear-gradient(90deg,#8a8a8a 0 1px,transparent 1px 2px)"></div>
<svg style="left:11px;top:552px" width="9" height="9"><rect x="0.5" y="0.5" width="8" height="8" rx="1" fill="url(#bg9)" stroke="#9a9a9a"/><path d="M2 4.5h5" stroke="#2a3a8a" stroke-width="1"/><path d="M4.5 2v5" stroke="#2a3a8a" stroke-width="1"/></svg>
<svg style="left:26px;top:548px" width="16" height="16" viewBox="0 0 16 16"><circle cx="8" cy="5" r="3.6" fill="url(#ug)" stroke="#2e3338" stroke-width="1.1"/><path d="M1.2 14.5c0-3.6 2.6-5.8 6.8-5.8s6.8 2.2 6.8 5.8z" fill="url(#ug)" stroke="#2e3338" stroke-width="1.1"/></svg>
<div class="t" style="left:6px;top:95.2px;font-size:11.81px;color:#fff">Дерево объектов</div>
<div class="t" style="left:47px;top:116px;font-size:11.85px">Рабочий стол (Орлова Ольга Петровна)</div>
<div class="t" style="left:47px;top:134px;font-size:11.85px">Хранилище документов</div>
<div class="t" style="left:66px;top:152px;font-size:11.85px">Внешний документооборот</div>
<div class="t" style="left:85px;top:170px;font-size:11.85px">Договоры</div>
<div class="t" style="left:104px;top:188px;font-size:11.85px">Не зарегистрированные</div>
<div class="t" style="left:123px;top:206px;font-size:11.85px">Договор ген. подряда</div>
<div class="t" style="left:104px;top:224px;font-size:11.85px">2022</div>
<div class="t" style="left:104px;top:242px;font-size:11.85px">2024</div>
<div class="t" style="left:104px;top:260px;font-size:11.85px">2025</div>
<div class="t" style="left:104px;top:278px;font-size:11.85px">2026</div>
<div class="t" style="left:85px;top:296px;font-size:11.85px">Входящие документы</div>
<div class="t" style="left:85px;top:314px;font-size:11.85px">Исходящие документы</div>
<div class="t" style="left:66px;top:332px;font-size:11.85px">Внутренний документооборот</div>
<div class="t" style="left:66px;top:350px;font-size:11.85px">Проекты</div>
<div class="t" style="left:66px;top:368px;font-size:11.85px">Архив проектов</div>
<div class="t" style="left:66px;top:386px;font-size:11.85px">Проектный документооборот</div>
<div class="t" style="left:66px;top:404px;font-size:11.85px">Поручения и задачи</div>
<div class="t" style="left:66px;top:422px;font-size:11.85px">Дела</div>
<div class="t" style="left:66px;top:440px;font-size:11.85px">Справочники</div>
<div class="t" style="left:66px;top:458px;font-size:11.85px">Структура предприятия</div>
<div class="t" style="left:66px;top:476px;font-size:11.85px">Отчеты</div>
<div class="t" style="left:66px;top:494px;font-size:11.85px">Шаблоны</div>
<div class="t" style="left:47px;top:512px;font-size:11.85px">Классификаторы</div>
<div class="t" style="left:47px;top:530px;font-size:11.85px">Почта (Орлова Ольга Петровна)</div>
<div class="t" style="left:47px;top:548px;font-size:11.85px">Пользователи</div>
<div class="t" style="left:8px;top:718px;font-size:11.5px;color:#333">0 объектов</div>

<!-- splitter -->
<div class="a" style="left:475px;top:92px;width:5px;height:620px;background:#e6e6e6"></div>
<!-- top right panel -->
<div class="a" style="left:480px;top:92px;width:897px;height:19px;background:#eeeeee;border-left:1px solid #8c8c8c"></div>
<div class="a" style="left:480px;top:92px;width:897px;height:1px;background:#c4c4c4"></div>
<svg style="left:484px;top:94px" width="120" height="18"><path d="M0.5 17.5L17 0.5H114a2 2 0 0 1 2 2V17.5" fill="url(#tabg)" stroke="#8d8d8d" stroke-width="1"/><defs><linearGradient id="tabg" x1="0" y1="0" x2="0" y2="1"><stop offset="0" stop-color="#fff"/><stop offset="1" stop-color="#ebebeb"/></linearGradient></defs></svg>
<svg style="left:587px;top:98px" width="9" height="9"><path d="M0.7 0.7l7.6 7.6M8.3 0.7l-7.6 7.6" stroke="#000" stroke-width="1.6"/></svg>
<svg style="left:1361px;top:100px" width="10" height="6"><path d="M0 0h10l-5 6z" fill="#000"/></svg>
<div class="a" style="left:480px;top:111px;width:897px;height:39px;background:linear-gradient(#fff 0%,#fff 30%,#ececec 60%,#c6c6c6 100%);border-left:1px solid #8c8c8c"></div>
<div class="a" style="left:615px;top:112px;width:37px;height:10px;background:#c5d5e3;border:2px solid #2a7fd4"></div>
<!-- grid -->
<div class="a" style="left:480px;top:149px;width:897px;height:221px;background:#fff;border:1px solid #8c8c8c;border-bottom-color:#7d8591"></div>
<div class="a" style="left:482px;top:151px;width:894px;height:1px;background:#d0d0d0"></div>
<div class="a" style="left:1176px;top:152px;width:1px;height:42px;background:#d4d4d4"></div>
<div class="a" style="left:1294px;top:152px;width:1px;height:42px;background:#d4d4d4"></div>
<div class="a" style="left:1080px;top:193px;width:215px;height:1px;background:#c8c8c8"></div>
<div class="a" style="left:1159px;top:173px;width:15px;height:19px;background:#ededed;border-right:1px solid #9a9a9a;border-bottom:1px solid #9a9a9a"></div>
<svg style="left:1163px;top:181px" width="7" height="4"><path d="M0 0h7l-3.5 4z" fill="#000"/></svg>
<div class="a" style="left:1277px;top:173px;width:15px;height:19px;background:#ededed;border-right:1px solid #9a9a9a;border-bottom:1px solid #9a9a9a"></div>
<svg style="left:1281px;top:181px" width="7" height="4"><path d="M0 0h7l-3.5 4z" fill="#000"/></svg>
<div class="a" style="left:480px;top:370px;width:897px;height:4px;background:#e8e8e8"></div>
<!-- bottom right panel -->
<div class="a" style="left:480px;top:374px;width:897px;height:19px;background:#bdbdbd;border-left:1px solid #8c8c8c;border-top:1px solid #a2a2a2;border-bottom:1px solid #a8a8a8"></div>
<svg style="left:1329px;top:380px" width="10" height="6"><path d="M0 0h9.5l-4.75 5.5z" fill="#fff"/></svg>
<svg style="left:1346px;top:377px" width="9" height="10"><path d="M2 0.5h5M2.5 0.5v5M6.5 0.5v5M1 5.5h7M4.5 5.5v4" stroke="#fff" stroke-width="1.3" fill="none"/></svg>
<svg style="left:1363px;top:378px" width="9" height="9"><path d="M0.5 0.5l8 8M8.5 0.5l-8 8" stroke="#fff" stroke-width="1.5"/></svg>
<div class="a" style="left:480px;top:393px;width:897px;height:320px;background:#f0f0f0;border-left:1px solid #8c8c8c;border-right:1px solid #8c8c8c;border-bottom:1px solid #8c8c8c"></div>
<div class="a" style="left:484px;top:395px;width:891px;height:20px;background:#808080"></div>
<svg style="left:1343px;top:398px" width="15" height="13" viewBox="0 0 15 13"><path d="M3.6 11V0.7h10.3a1 1 0 0 1 0 2.4H11.6V12.3H1.2a1.2 1.2 0 0 1 0-2.4H8" fill="#fff" stroke="#2a2f33" stroke-width="1.2"/><path d="M5.2 2.8h4.3M5.2 4.8h4.3M5.2 6.8h4.3M5.2 8.8h4.3" stroke="#2a2f33" stroke-width="1.1"/></svg>
<svg style="left:1363px;top:403px" width="8" height="4"><path d="M0 0h8l-4 4z" fill="#fff"/></svg>
<div class="a" style="left:484px;top:419px;width:853px;height:1px;background:#a0a0a0"></div>
<div class="a" style="left:484px;top:419px;width:1px;height:270px;background:#a0a0a0"></div>
<div class="a" style="left:1321px;top:420px;width:1px;height:269px;background:#d8d8d8"></div>
<div class="a" style="left:1328px;top:437px;width:2px;height:142px;background:#8a8a8a"></div>
<div class="a" style="left:1341px;top:420px;width:1px;height:288px;background:#a8a8a8"></div>
<!-- right vertical toolbar -->
<div class="a" style="left:1346px;top:419px;width:26px;height:21px;background:#cde6f7;border:1px solid #92c0e6;border-radius:3px"></div>







<div id="rtb"></div>
<!-- content fields -->
<div class="a" style="left:1173px;top:461px;width:134px;height:19px;background:#efefef;border:1px solid #e6e6e6;border-bottom:1px solid #8a8a8a"></div>
<div class="a" style="left:1173px;top:509px;width:134px;height:19px;background:#efefef;border:1px solid #e6e6e6;border-bottom:1px solid #8a8a8a"></div>
<div class="a" style="left:719px;top:551px;width:522px;height:18px;background:#efefef;border-bottom:1px solid #8a8a8a"></div>
<div class="a" style="left:1240px;top:551px;width:17px;height:18px;background:#f6f6f6;border-right:1px solid #9a9a9a;border-bottom:1px solid #9a9a9a"></div>
<svg style="left:1246px;top:556px" width="4" height="7"><path d="M0 0l4 3.5-4 3.5z" fill="#000"/></svg>
<div class="a" style="left:719px;top:575px;width:522px;height:18px;background:#efefef;border-bottom:1px solid #8a8a8a"></div>
<div class="a" style="left:1240px;top:575px;width:17px;height:18px;background:#f6f6f6;border-right:1px solid #9a9a9a;border-bottom:1px solid #9a9a9a"></div>
<svg style="left:1246px;top:580px" width="4" height="7"><path d="M0 0l4 3.5-4 3.5z" fill="#000"/></svg>
<svg style="left:721px;top:577px" width="15" height="15" viewBox="0 0 15 15"><rect x="0" y="0" width="15" height="15" fill="#8a8a8a"/><rect x="2" y="3" width="4" height="3" fill="#5a5a5a"/><rect x="8" y="3" width="4" height="3" fill="#5a5a5a"/><rect x="2" y="8" width="4" height="3" fill="#5a5a5a"/><rect x="8" y="8" width="4" height="3" fill="#5a5a5a"/></svg>
<!-- building icons -->
<g id="bld"></g>
<svg style="left:1265px;top:550px" width="18" height="20" viewBox="0 0 18 20"><rect x="0" y="0" width="18" height="20" fill="#fcfcfc"/><path d="M0 19.5h18M17.5 0v20" stroke="#8a8a8a"/><path d="M9.5 2.5h3v1" fill="none" stroke="#555" stroke-width="1"/><rect x="4.6" y="3.6" width="11" height="14.4" fill="#a9a9a9" stroke="#5a5a5a" stroke-width="1.2"/><rect x="2.6" y="6.6" width="5.2" height="11.4" fill="#a9a9a9" stroke="#5a5a5a" stroke-width="1.2"/><rect x="4" y="8.5" width="2.5" height="2.5" fill="#666"/><rect x="4" y="13.5" width="2.5" height="2.5" fill="#666"/><rect x="10" y="6.5" width="2.5" height="2.5" fill="#666"/><circle cx="12.8" cy="13.6" r="2.1" fill="#fbdca8"/><path d="M10.6 13.2a2.2 1.8 0 0 1 4.4 0z" fill="#7a4a1a"/><rect x="10.2" y="16" width="5.4" height="2.8" fill="#1a5fd0"/><path d="M12 16.2h1.8l-0.9 2.6z" fill="#e01010"/></svg>
<svg style="left:1288px;top:550px" width="18" height="20" viewBox="0 0 18 20"><rect x="0" y="0" width="18" height="20" fill="#fcfcfc"/><path d="M0 19.5h18M17.5 0v20" stroke="#8a8a8a"/><path d="M9.5 2.5h3v1" fill="none" stroke="#555" stroke-width="1"/><rect x="4.6" y="3.6" width="11" height="14.4" fill="#a9a9a9" stroke="#5a5a5a" stroke-width="1.2"/><rect x="2.6" y="6.6" width="5.2" height="11.4" fill="#a9a9a9" stroke="#5a5a5a" stroke-width="1.2"/><rect x="4" y="8.5" width="2.5" height="2.5" fill="#666"/><rect x="4" y="13.5" width="2.5" height="2.5" fill="#666"/><rect x="10" y="6.5" width="2.5" height="2.5" fill="#666"/><circle cx="12.8" cy="13.6" r="2.1" fill="#fbdca8"/><path d="M10.6 13.2a2.2 1.8 0 0 1 4.4 0z" fill="#7a4a1a"/><rect x="10.2" y="16" width="5.4" height="2.8" fill="#1a5fd0"/><path d="M12 16.2h1.8l-0.9 2.6z" fill="#e01010"/><circle cx="5.3" cy="5" r="2.6" fill="#f8f000"/></svg>
<svg style="left:1265px;top:574px" width="18" height="20" viewBox="0 0 18 20"><rect x="0" y="0" width="18" height="20" fill="#fcfcfc"/><path d="M0 19.5h18M17.5 0v20" stroke="#8a8a8a"/><path d="M9.5 2.5h3v1" fill="none" stroke="#555" stroke-width="1"/><rect x="4.6" y="3.6" width="11" height="14.4" fill="#a9a9a9" stroke="#5a5a5a" stroke-width="1.2"/><rect x="2.6" y="6.6" width="5.2" height="11.4" fill="#a9a9a9" stroke="#5a5a5a" stroke-width="1.2"/><rect x="4" y="8.5" width="2.5" height="2.5" fill="#666"/><rect x="4" y="13.5" width="2.5" height="2.5" fill="#666"/><rect x="10" y="6.5" width="2.5" height="2.5" fill="#666"/><circle cx="12.8" cy="13.6" r="2.1" fill="#fbdca8"/><path d="M10.6 13.2a2.2 1.8 0 0 1 4.4 0z" fill="#7a4a1a"/><rect x="10.2" y="16" width="5.4" height="2.8" fill="#1a5fd0"/><path d="M12 16.2h1.8l-0.9 2.6z" fill="#e01010"/></svg>
<svg style="left:1288px;top:574px" width="18" height="20" viewBox="0 0 18 20"><rect x="0" y="0" width="18" height="20" fill="#fcfcfc"/><path d="M0 19.5h18M17.5 0v20" stroke="#8a8a8a"/><path d="M9.5 2.5h3v1" fill="none" stroke="#555" stroke-width="1"/><rect x="4.6" y="3.6" width="11" height="14.4" fill="#a9a9a9" stroke="#5a5a5a" stroke-width="1.2"/><rect x="2.6" y="6.6" width="5.2" height="11.4" fill="#a9a9a9" stroke="#5a5a5a" stroke-width="1.2"/><rect x="4" y="8.5" width="2.5" height="2.5" fill="#666"/><rect x="4" y="13.5" width="2.5" height="2.5" fill="#666"/><rect x="10" y="6.5" width="2.5" height="2.5" fill="#666"/><circle cx="12.8" cy="13.6" r="2.1" fill="#fbdca8"/><path d="M10.6 13.2a2.2 1.8 0 0 1 4.4 0z" fill="#7a4a1a"/><rect x="10.2" y="16" width="5.4" height="2.8" fill="#1a5fd0"/><path d="M12 16.2h1.8l-0.9 2.6z" fill="#e01010"/><circle cx="5.3" cy="5" r="2.6" fill="#f8f000"/></svg>
<div class="a" style="left:614px;top:600px;width:149px;height:18px;background:#efefef;border:1px solid #e4e4e4;border-bottom:1px solid #8a8a8a"></div>
<div class="a" style="left:1103px;top:599px;width:180px;height:23px;background:#f0f0f0;border:1px solid #c4c4c4;border-bottom:1px solid #a0a0a0;border-right:1px solid #a0a0a0"></div>
<svg style="left:1117px;top:602px" width="17" height="17" viewBox="0 0 17 17"><rect x="0.5" y="0.5" width="16" height="16" fill="#fff" stroke="#1a2a9a" stroke-dasharray="1 1"/><rect x="1.5" y="1.5" width="14" height="3" fill="#1a2a9a"/><path d="M2 5l3 10h2l1.5-6 1.5 6h2l3-10h-2.5l-1.5 6-1.5-6h-2l-1.5 6-1.5-6z" fill="#1a2a9a"/></svg>
<!-- groups -->
<div class="a" style="left:494px;top:638px;width:389px;height:60px;border:1px solid #d8d8d8;border-bottom:none"></div>
<div class="a" style="left:636px;top:649px;width:223px;height:18px;background:#efefef;border:1px solid #e4e4e4;border-bottom:1px solid #8a8a8a"></div>
<div class="a" style="left:636px;top:673px;width:223px;height:18px;background:#efefef;border:1px solid #e4e4e4;border-bottom:1px solid #8a8a8a"></div>
<div class="a" style="left:891px;top:638px;width:389px;height:60px;border:1px solid #d8d8d8;border-bottom:none"></div>
<div class="a" style="left:1034px;top:649px;width:224px;height:18px;background:#efefef;border:1px solid #e4e4e4;border-bottom:1px solid #8a8a8a"></div>
<div class="a" style="left:1034px;top:673px;width:224px;height:18px;background:#efefef;border:1px solid #e4e4e4;border-bottom:1px solid #8a8a8a"></div>
<!-- bottom tabs -->
<div class="a" style="left:485px;top:689px;width:852px;height:23px;background:#f0f0f0"></div>
<div class="a" style="left:485px;top:688px;width:852px;height:1px;background:#a0a0a0"></div>
<div class="a" style="left:486px;top:688px;width:69px;height:21px;background:#fff;border-right:1px solid #9a9a9a;border-bottom:1px solid #9a9a9a;border-bottom-right-radius:3px"></div>
<div class="a" style="left:555px;top:689px;width:131px;height:18px;background:#f0f0f0;border:1px solid #cfcfcf;border-top:none;border-right:1px solid #8a8a8a;border-bottom:1px solid #9a9a9a;border-bottom-right-radius:3px"></div>
<div class="a" style="left:686px;top:689px;width:160px;height:18px;background:#f0f0f0;border:1px solid #cfcfcf;border-top:none;border-right:1px solid #8a8a8a;border-bottom:1px solid #9a9a9a;border-bottom-right-radius:3px"></div>
<div class="a" style="left:850px;top:689px;width:108px;height:18px;background:#f0f0f0;border:1px solid #cfcfcf;border-top:none;border-right:1px solid #8a8a8a;border-bottom:1px solid #9a9a9a;border-bottom-right-radius:3px"></div>
<div class="a" style="left:961px;top:689px;width:76px;height:18px;background:#f0f0f0;border:1px solid #cfcfcf;border-top:none;border-right:1px solid #8a8a8a;border-bottom:1px solid #9a9a9a;border-bottom-right-radius:3px"></div>
<div class="a" style="left:1038px;top:689px;width:130px;height:18px;background:#f0f0f0;border:1px solid #cfcfcf;border-top:none;border-right:1px solid #8a8a8a;border-bottom:1px solid #9a9a9a;border-bottom-right-radius:3px"></div>
<div class="a" style="left:1169px;top:689px;width:96px;height:18px;background:#f0f0f0;border:1px solid #cfcfcf;border-top:none;border-right:1px solid #8a8a8a;border-bottom:1px solid #9a9a9a;border-bottom-right-radius:3px"></div>
<div class="a" style="left:1265px;top:689px;width:35px;height:18px;background:#f0f0f0;border:1px solid #cfcfcf;border-top:none;border-right:1px solid #8a8a8a;border-bottom:1px solid #9a9a9a;border-bottom-right-radius:3px"></div>
<div class="a" style="left:1303px;top:691px;width:34px;height:17px;background:#fafafa;border:1px solid #c8c8c8;border-radius:2px"></div>
<div class="a" style="left:1320px;top:692px;width:1px;height:15px;background:#c8c8c8"></div>
<svg style="left:1309px;top:696px" width="4" height="7"><path d="M4 0l-4 3.5 4 3.5z" fill="#000"/></svg>
<svg style="left:1327px;top:696px" width="4" height="7"><path d="M0 0l4 3.5-4 3.5z" fill="#000"/></svg>
<!-- status bar right -->
<div class="a" style="left:696px;top:716px;width:1px;height:18px;background:#d4d4d4"></div>
<div class="a" style="left:1114px;top:716px;width:1px;height:18px;background:#d4d4d4"></div>
<div class="a" style="left:1359px;top:716px;width:1px;height:18px;background:#d4d4d4"></div>
<svg style="left:1118px;top:718px" width="16" height="13" viewBox="0 0 16 13"><rect x="0.5" y="0.5" width="15" height="12" fill="#fff" stroke="#1a6fc7" stroke-width="1"/><path d="M0.5 0.5l7.5 6 7.5-6M0.5 12.5l5.5-5M15.5 12.5l-5.5-5" fill="none" stroke="#1a6fc7" stroke-width="1"/></svg>
<svg style="left:1364px;top:723px" width="10" height="10"><g fill="#b0b0b0"><rect x="7" y="1" width="2" height="2"/><rect x="4" y="4" width="2" height="2"/><rect x="7" y="4" width="2" height="2"/><rect x="1" y="7" width="2" height="2"/><rect x="4" y="7" width="2" height="2"/><rect x="7" y="7" width="2" height="2"/></g></svg>

<div class="t b" style="left:505.7px;top:96.5px;font-size:11.2px;transform:scaleX(0.948);transform-origin:0 50%">Окно состава</div>
<div class="t" style="left:1089.3px;top:156px;font-size:11.2px;transform:scaleX(0.974);transform-origin:0 50%">Статус</div>
<div class="t" style="left:1181px;top:156px;font-size:11.8px">Дата модификации</div>
<div class="t" style="left:1093px;top:175px;font-size:11.21px;color:#888;width:61px;overflow:hidden">Введите текст</div>
<div class="t" style="left:1186.3px;top:175px;font-size:11.21px;color:#888">Введите текст</div>
<div class="t b" style="right:230px;top:397.8px;font-size:12px;color:#fff;text-decoration:underline">Договор ген. подряда № 15-2026 от 03.03.2026 (текущая версия)</div>
<div class="t" style="left:1281px;top:397.8px;font-size:12.23px;color:#fff">Черновик</div>
<div class="t" style="right:219.29999999999995px;top:461.7px;font-size:11.3px">Дата согласования</div>
<div class="t" style="right:228.4000000000001px;top:509.6px;font-size:11.3px">Дата подписания</div>
<div class="t" style="left:741.3px;top:577.8px;font-size:11.2px;transform:scaleX(0.945);transform-origin:0 50%">ООО "TDMS Фарватер", ИНН 5505025670</div>
<div class="t b" style="left:493px;top:577.8px;font-size:11.7px">Генеральный проектировщик</div>
<div class="t" style="left:493px;top:602px;font-size:11.2px;transform:scaleX(0.963);transform-origin:0 50%">Актуальная сумма</div>
<div class="t" style="left:619.2px;top:602px;font-size:11.2px;transform:scaleX(0.963);transform-origin:0 50%">1 000 000.00</div>
<div class="t" style="left:1136.5px;top:603.5px;font-size:11.2px;transform:scaleX(0.94);transform-origin:0 50%">История изменения суммы</div>
<div class="t" style="left:502px;top:631.6px;font-size:11.2px;transform:scaleX(0.988);transform-origin:0 50%;background:#f0f0f0;padding:0 3px;margin-left:-3px">Сроки выполнения работ по плану</div>
<div class="t" style="left:508px;top:651.5px;font-size:11.2px;transform:scaleX(0.989);transform-origin:0 50%">Дата начала работ</div>
<div class="t" style="left:640.5px;top:651.5px;font-size:11.2px;transform:scaleX(0.997);transform-origin:0 50%">02.03.2026 09:00:00</div>
<div class="t" style="left:508px;top:674.6px;font-size:11.2px;transform:scaleX(0.998);transform-origin:0 50%">Дата окончания работ</div>
<div class="t" style="left:640.5px;top:674.6px;font-size:11.2px;transform:scaleX(0.997);transform-origin:0 50%">02.06.2026 18:00:00</div>
<div class="t" style="left:898.8px;top:631.6px;font-size:11.2px;transform:scaleX(0.985);transform-origin:0 50%;background:#f0f0f0;padding:0 3px;margin-left:-3px">Сроки выполнения работ по факту</div>
<div class="t" style="left:905px;top:651.5px;font-size:11.2px;transform:scaleX(0.989);transform-origin:0 50%">Дата начала работ</div>
<div class="t" style="left:905px;top:674.6px;font-size:11.2px;transform:scaleX(0.998);transform-origin:0 50%">Дата окончания работ</div>
<div class="t b" style="left:494px;top:692.5px;font-size:13.18px">Договор</div>
<div class="t" style="left:567px;top:691.6px;font-size:12.37px">Предмет договора</div>
<div class="t" style="left:699.9px;top:691.6px;font-size:12.22px">Прикреплённые файлы</div>
<div class="t" style="left:860.3px;top:691.6px;font-size:11.99px">Связи договора</div>
<div class="t" style="left:969.7px;top:691.6px;font-size:12.14px">Ход работ</div>
<div class="t" style="left:1048.3px;top:691.6px;font-size:12.46px">История состояний</div>
<div class="t" style="left:1180.5px;top:691.6px;font-size:12.07px">Комментарии</div>
<div class="t" style="left:1273.4px;top:691.6px;font-size:12.2px;width:27px;overflow:hidden">Архив</div>
<div class="t" style="left:1138.8px;top:718px;font-size:11.5px;width:219px;overflow:hidden">У вас 18 непрочитанных сообщений в папке</div>
<svg style="left:1352px;top:422px" width="15" height="15" viewBox="0 0 15 15"><rect x="0.7" y="0.7" width="13.6" height="13.6" fill="#f6f6f6" stroke="#2a2f33" stroke-width="1.3"/><rect x="3" y="3.6" width="9" height="2.6" rx="0.6" fill="#3c4146"/><circle cx="10.6" cy="4.9" r="0.6" fill="#fff"/><rect x="3" y="8" width="9" height="2.6" rx="0.6" fill="#1a6fc7"/><circle cx="10.6" cy="9.3" r="0.6" fill="#fff"/></svg>
<svg style="left:1351px;top:445px" width="16" height="16" viewBox="0 0 16 16"><circle cx="6.2" cy="6.2" r="4.8" fill="#e4e8ec" stroke="#2a2f33" stroke-width="1.3"/><path d="M9.6 9.6l5 5" stroke="#2a2f33" stroke-width="2.6" stroke-linecap="round"/><path d="M10.6 10.6l3 3" stroke="#8a9096" stroke-width="0.8"/></svg>
<svg style="left:1350px;top:469px" width="17" height="10" viewBox="0 0 17 10"><path d="M3.5 1h3.5l1.5 1.2L10 1h3.5a3 3 0 0 1 0 8H10L8.5 7.8 7 9H3.5a3 3 0 0 1 0-8z" fill="#f4f4f4" stroke="#2a2f33" stroke-width="1.3"/><path d="M4 5h9" stroke="#2a2f33" stroke-width="1.4"/><circle cx="3.3" cy="5" r="0.8" fill="#2a2f33"/><circle cx="13.7" cy="5" r="0.8" fill="#2a2f33"/></svg>
<svg style="left:1351px;top:488px" width="17" height="17" viewBox="0 0 17 17"><circle cx="5" cy="4.5" r="3" fill="#cfd3d8" stroke="#3a3f44" stroke-width="1"/><path d="M5 7.5v8M5 12h2M5 14h2" stroke="#3a3f44" stroke-width="1.4"/><circle cx="8.2" cy="6.6" r="3.6" fill="#f6c02a" stroke="#b07a00" stroke-width="0.9"/><circle cx="7.6" cy="6" r="1" fill="#8a5a00"/><path d="M10.6 9l5.4 5.4M13 11.4l-1.6 1.6M14.8 13.2l-1.6 1.6" stroke="#e8a818" stroke-width="2.2"/></svg>
<svg style="left:1351px;top:510px" width="16" height="16" viewBox="0 0 16 16"><path d="M1.5 13.5L3 8.5l7.5-7.5 4 4-7.5 7.5z" fill="#2a2f33" stroke="#2a2f33" stroke-width="1"/><path d="M3.5 9.5l6.5-6.5 2.5 2.5-6.5 6.5z" fill="#ffffff" opacity="0.0"/><circle cx="6.6" cy="8.9" r="1.3" fill="#fff"/><path d="M1.5 13.5l4-4" stroke="#fff" stroke-width="0.8"/><path d="M5 14.5h10.5" stroke="#2a2f33" stroke-width="1.3"/></svg>
<svg style="left:1350px;top:532px" width="17" height="16" viewBox="0 0 17 16"><path d="M1 15V4.5L3.2 2.5H5.5V15z" fill="#e8eaec" stroke="#2a2f33" stroke-width="1.1"/><path d="M5.5 15V4.5L7.7 2.5H10V15z" fill="#f4f5f6" stroke="#2a2f33" stroke-width="1.1"/><path d="M10 15V4.5L12.2 2.5H15.8V12.5L13.5 15z" fill="#cfe6fa" stroke="#1a6fc7" stroke-width="1.1"/><path d="M10 4.5h3.5l2.3-2" fill="none" stroke="#1a6fc7" stroke-width="0.8"/></svg>
<svg style="left:1350px;top:555px" width="17" height="16" viewBox="0 0 17 16"><path d="M1 14.5V2.5h5l1.3 1.3H15v10.7z" fill="#e6eaee" stroke="#2a2f33" stroke-width="1.1"/><path d="M1 5.5h14" stroke="#2a2f33" stroke-width="0.8"/><circle cx="11.5" cy="11" r="2.6" fill="none" stroke="#1a6fc7" stroke-width="1.6"/><path d="M11.5 6.8v8.4M7.3 11h8.4M8.6 8.1l5.8 5.8M14.4 8.1l-5.8 5.8" stroke="#1a6fc7" stroke-width="1"/><circle cx="11.5" cy="11" r="1" fill="#fff"/></svg>
<div class="a" style="left:178px;top:118px;width:913px;height:463px;background:#f0f0f0;border:1px solid #9a9a9a;border-radius:8px;box-shadow:0 36px 40px 0 rgba(0,0,0,0.3),0 0 8px rgba(0,0,0,0.07)"></div>
<div class="a" style="left:180px;top:119px;width:909px;height:31px;background:#f3f3f3;border-top-left-radius:7px;border-top-right-radius:7px"></div>
<svg style="left:187px;top:125px" width="16" height="16" viewBox="0 0 16 16"><circle cx="8" cy="8" r="7.3" fill="url(#gb)" stroke="#777" stroke-width="0.8"/><ellipse cx="8" cy="8" rx="3.2" ry="2.6" fill="none" stroke="#fff" stroke-width="1.1"/><line x1="8" y1="4.5" x2="8" y2="11.5" stroke="#fff" stroke-width="1.1"/></svg>
<div class="a" style="left:971px;top:133px;width:10px;height:1px;background:#000"></div>
<div class="a" style="left:1016px;top:128px;width:10px;height:10px;border:1px solid #000;border-radius:1px"></div>
<svg style="left:1062px;top:128px" width="10" height="10"><path d="M0 0L10 10M10 0L0 10" stroke="#000" stroke-width="1"/></svg>
<div class="a" style="left:183px;top:150px;width:903px;height:22px;background:#808080"></div>
<svg style="left:190px;top:154px" width="11" height="13" viewBox="0 0 11 13"><rect x="0.7" y="1.7" width="9.6" height="10.6" fill="#fff" stroke="#2a2a2a" stroke-width="1.3"/><path d="M2.5 0v3M5.5 0v3M8.5 0v3" stroke="#2a2a2a" stroke-width="1"/><path d="M2.5 4.5h6M2.5 7.5h6M2.5 10.5h6" stroke="#2a2a2a" stroke-width="1.1"/></svg>
<svg style="left:1055px;top:155px" width="15" height="13" viewBox="0 0 15 13"><path d="M3.6 11V0.7h10.3a1 1 0 0 1 0 2.4H11.6V12.3H1.2a1.2 1.2 0 0 1 0-2.4H8" fill="#fff" stroke="#2a2f33" stroke-width="1.2"/><path d="M5.2 2.8h4.3M5.2 4.8h4.3M5.2 6.8h4.3M5.2 8.8h4.3" stroke="#2a2f33" stroke-width="1.1"/></svg>
<svg style="left:1075px;top:160px" width="7" height="4"><path d="M0 0h7l-3.5 4z" fill="#fff"/></svg>
<div class="a" style="left:183px;top:174px;width:903px;height:1px;background:#a8a8a8"></div>
<div class="a" style="left:183px;top:178px;width:788px;height:350px;border-top:1px solid #a0a0a0;border-left:1px solid #a0a0a0;border-bottom:1px solid #a0a0a0;border-right:1px solid #fafafa"></div>
<div class="a" style="left:974px;top:178px;width:1px;height:369px;background:#a0a0a0"></div>
<div class="a" style="left:292px;top:193px;width:81px;height:19px;background:#fff;border-bottom:2px solid #0067c0"></div>
<div class="a" style="left:293px;top:219px;width:547px;height:19px;background:#fff;border:1px solid #f4f4f4;border-bottom:1px solid #7a7a7a;"></div>
<div class="a" style="left:185px;top:254px;width:389px;height:96px;border:1px solid #d6d6d6;border-top-color:#dcdcdc"></div>
<div class="a" style="left:576px;top:254px;width:381px;height:96px;border:1px solid #d6d6d6"></div>
<div class="a" style="left:190px;top:247px;width:182px;height:14px;background:#f0f0f0"></div>
<div class="a" style="left:581px;top:247px;width:186px;height:14px;background:#f0f0f0"></div>
<div class="a" style="left:322px;top:265px;width:223px;height:18px;background:#fff;border:1px solid #f4f4f4;border-bottom:1px solid #7a7a7a;"></div>
<div class="a" style="left:322px;top:289px;width:223px;height:18px;background:#fff;border:1px solid #f4f4f4;border-bottom:1px solid #7a7a7a;"></div>
<div class="a" style="left:529px;top:266px;width:15px;height:16px;background:linear-gradient(#f7f7f7,#e4e4e4);border-left:1px solid #e0e0e0"></div>
<svg style="left:533px;top:272px" width="7" height="4"><path d="M0 0h7l-3.5 4z" fill="#000"/></svg>
<div class="a" style="left:529px;top:290px;width:15px;height:16px;background:linear-gradient(#f7f7f7,#e4e4e4);border-left:1px solid #e0e0e0"></div>
<svg style="left:533px;top:296px" width="7" height="4"><path d="M0 0h7l-3.5 4z" fill="#000"/></svg>
<div class="a" style="left:322px;top:324px;width:110px;height:18px;background:#efefef;border:1px solid #e2e2e2;border-bottom:1px solid #7a7a7a;"></div>
<div class="a" style="left:719px;top:264px;width:223px;height:19px;background:#efefef;border:1px solid #e2e2e2;border-bottom:1px solid #7a7a7a;"></div>
<div class="a" style="left:719px;top:288px;width:223px;height:19px;background:#efefef;border:1px solid #e2e2e2;border-bottom:1px solid #7a7a7a;"></div>
<div class="a" style="left:329px;top:358px;width:208px;height:19px;background:#fff;border:1px solid #f4f4f4;border-bottom:1px solid #7a7a7a;"></div>
<div class="a" style="left:329px;top:384px;width:208px;height:19px;background:#fff;border:1px solid #f4f4f4;border-bottom:1px solid #7a7a7a;"></div>
<div class="a" style="left:449px;top:411px;width:208px;height:18px;background:#fff;border:1px solid #f4f4f4;border-bottom:1px solid #7a7a7a;"></div>
<div class="a" style="left:979px;top:178px;width:107px;height:21px;background:#cce8ff;border:1px solid #99d1ff;border-radius:3px"></div>
<svg style="left:983px;top:182px" width="15" height="15" viewBox="0 0 15 15"><rect x="0.7" y="0.7" width="13.6" height="13.6" fill="#f6f6f6" stroke="#2a2f33" stroke-width="1.3"/><rect x="3" y="3.6" width="9" height="2.6" rx="0.6" fill="#3c4146"/><circle cx="10.6" cy="4.9" r="0.6" fill="#fff"/><rect x="3" y="8" width="9" height="2.6" rx="0.6" fill="#1a6fc7"/><circle cx="10.6" cy="9.3" r="0.6" fill="#fff"/></svg>
<svg style="left:982px;top:203px" width="16" height="16" viewBox="0 0 16 16"><circle cx="6.2" cy="6.2" r="4.8" fill="#e4e8ec" stroke="#2a2f33" stroke-width="1.3"/><path d="M9.6 9.6l5 5" stroke="#2a2f33" stroke-width="2.6" stroke-linecap="round"/><path d="M10.6 10.6l3 3" stroke="#8a9096" stroke-width="0.8"/></svg>
<svg style="left:982px;top:228px" width="17" height="10" viewBox="0 0 17 10"><path d="M3.5 1h3.5l1.5 1.2L10 1h3.5a3 3 0 0 1 0 8H10L8.5 7.8 7 9H3.5a3 3 0 0 1 0-8z" fill="#f4f4f4" stroke="#2a2f33" stroke-width="1.3"/><path d="M4 5h9" stroke="#2a2f33" stroke-width="1.4"/><circle cx="3.3" cy="5" r="0.8" fill="#2a2f33"/><circle cx="13.7" cy="5" r="0.8" fill="#2a2f33"/></svg>
<svg style="left:982px;top:246px" width="17" height="17" viewBox="0 0 17 17"><circle cx="5" cy="4.5" r="3" fill="#cfd3d8" stroke="#3a3f44" stroke-width="1"/><path d="M5 7.5v8M5 12h2M5 14h2" stroke="#3a3f44" stroke-width="1.4"/><circle cx="8.2" cy="6.6" r="3.6" fill="#f6c02a" stroke="#b07a00" stroke-width="0.9"/><circle cx="7.6" cy="6" r="1" fill="#8a5a00"/><path d="M10.6 9l5.4 5.4M13 11.4l-1.6 1.6M14.8 13.2l-1.6 1.6" stroke="#e8a818" stroke-width="2.2"/></svg>
<svg style="left:982px;top:268px" width="16" height="16" viewBox="0 0 16 16"><path d="M1.5 13.5L3 8.5l7.5-7.5 4 4-7.5 7.5z" fill="#2a2f33" stroke="#2a2f33" stroke-width="1"/><path d="M3.5 9.5l6.5-6.5 2.5 2.5-6.5 6.5z" fill="#ffffff" opacity="0.0"/><circle cx="6.6" cy="8.9" r="1.3" fill="#fff"/><path d="M1.5 13.5l4-4" stroke="#fff" stroke-width="0.8"/><path d="M5 14.5h10.5" stroke="#2a2f33" stroke-width="1.3"/></svg>
<svg style="left:982px;top:291px" width="17" height="16" viewBox="0 0 17 16"><path d="M1 15V4.5L3.2 2.5H5.5V15z" fill="#e8eaec" stroke="#2a2f33" stroke-width="1.1"/><path d="M5.5 15V4.5L7.7 2.5H10V15z" fill="#f4f5f6" stroke="#2a2f33" stroke-width="1.1"/><path d="M10 15V4.5L12.2 2.5H15.8V12.5L13.5 15z" fill="#cfe6fa" stroke="#1a6fc7" stroke-width="1.1"/><path d="M10 4.5h3.5l2.3-2" fill="none" stroke="#1a6fc7" stroke-width="0.8"/></svg>
<svg style="left:982px;top:313px" width="17" height="16" viewBox="0 0 17 16"><path d="M1 14.5V2.5h5l1.3 1.3H15v10.7z" fill="#e6eaee" stroke="#2a2f33" stroke-width="1.1"/><path d="M1 5.5h14" stroke="#2a2f33" stroke-width="0.8"/><circle cx="11.5" cy="11" r="2.6" fill="none" stroke="#1a6fc7" stroke-width="1.6"/><path d="M11.5 6.8v8.4M7.3 11h8.4M8.6 8.1l5.8 5.8M14.4 8.1l-5.8 5.8" stroke="#1a6fc7" stroke-width="1"/><circle cx="11.5" cy="11" r="1" fill="#fff"/></svg>
<div class="a" style="left:185px;top:527px;width:112px;height:21px;background:#fff;border-bottom:1px solid #9a9a9a;border-right:1px solid #9a9a9a;border-bottom-right-radius:3px"></div>
<div class="a" style="left:297px;top:528px;width:158px;height:18px;background:#f0f0f0;border:1px solid #cfcfcf;border-top:none;border-right:1px solid #8a8a8a;border-bottom:1px solid #9a9a9a;border-bottom-right-radius:3px"></div>
<div class="a" style="left:457px;top:528px;width:46px;height:18px;background:#f0f0f0;border:1px solid #cfcfcf;border-top:none;border-right:1px solid #8a8a8a;border-bottom:1px solid #9a9a9a;border-bottom-right-radius:3px"></div>
<div class="a" style="left:505px;top:528px;width:95px;height:18px;background:#f0f0f0;border:1px solid #cfcfcf;border-top:none;border-right:1px solid #8a8a8a;border-bottom:1px solid #9a9a9a;border-bottom-right-radius:3px"></div>
<div class="a" style="left:963px;top:554px;width:58px;height:22px;background:#fdfdfd;border:1px solid #d6d6d6;border-bottom-color:#c4c4c4;border-radius:4px"></div>
<div class="a" style="left:1027px;top:554px;width:58px;height:22px;background:#fdfdfd;border:1px solid #d6d6d6;border-bottom-color:#c4c4c4;border-radius:4px"></div>
<div class="t" style="left:209px;top:126.5px;font-size:11.65px">Свойства объекта</div>
<div class="t b" style="left:211px;top:153.5px;font-size:11.61px;color:#fff">Этап договора - Этап № черновика договора «Договор ген. подряда» от 03.03.2026</div>
<div class="t" style="left:992px;top:154px;font-size:12.14px;color:#fff">Черновик</div>
<div class="t b" style="left:196px;top:192.3px;font-size:11.78px">Номер этапа</div>
<div class="t" style="left:195.5px;top:218.4px;font-size:11.2px;transform:scaleX(0.934);transform-origin:0 50%">Наименование</div>
<div class="t" style="left:193px;top:247.3px;font-size:11.2px;transform:scaleX(0.975);transform-origin:0 50%">Сроки выполнения работ по плану</div>
<div class="t" style="left:193px;top:267.2px;font-size:11.2px;transform:scaleX(0.989);transform-origin:0 50%">Дата начала работ</div>
<div class="t" style="left:193px;top:290.8px;font-size:11.2px;transform:scaleX(0.998);transform-origin:0 50%">Дата окончания работ</div>
<div class="t" style="left:193px;top:324.2px;font-size:11.52px">Длительность, к.дн.</div>
<div class="t" style="left:584px;top:247.4px;font-size:11.2px;transform:scaleX(0.991);transform-origin:0 50%">Сроки выполнения работ по факту</div>
<div class="t" style="left:591px;top:267px;font-size:11.2px;transform:scaleX(0.989);transform-origin:0 50%">Дата начала работ</div>
<div class="t" style="left:591px;top:291.2px;font-size:11.2px;transform:scaleX(0.994);transform-origin:0 50%">Дата окончания работ</div>
<div class="t" style="left:187px;top:358.3px;font-size:11.2px;transform:scaleX(0.858);transform-origin:0 50%">Сумма</div>
<div class="t" style="left:187px;top:384.3px;font-size:11.2px;transform:scaleX(0.896);transform-origin:0 50%">Сумма НДС</div>
<div class="t" style="left:189.5px;top:410.2px;font-size:11.2px;transform:scaleX(0.954);transform-origin:0 50%">Ссылка для связи с внешними приложениями</div>
<div class="t" style="left:1003px;top:182.7px;font-size:11.5px">Свойства</div>
<div class="t" style="left:1003px;top:203.8px;font-size:12.2px">Просмотр</div>
<div class="t" style="left:1003px;top:225.4px;font-size:11.2px;transform:scaleX(0.982);transform-origin:0 50%">Связи</div>
<div class="t" style="left:1002px;top:247.5px;font-size:11.61px">Права доступа</div>
<div class="t" style="left:1003px;top:269.4px;font-size:12.01px">Подписи</div>
<div class="t" style="left:1003px;top:291.2px;font-size:11.86px">История</div>
<div class="t" style="left:1003px;top:313.3px;font-size:11.7px">Системные</div>
<div class="t b" style="left:193.3px;top:531.5px;font-size:12.93px">Карточка этапа</div>
<div class="t" style="left:309.7px;top:530.4px;font-size:12.11px">Прикреплённые файлы</div>
<div class="t" style="left:465.6px;top:530.4px;font-size:11.2px;transform:scaleX(0.969);transform-origin:0 50%">Связи</div>
<div class="t" style="left:515px;top:530.4px;font-size:12.07px">Комментарии</div>
<div class="t" style="left:983.6px;top:558px;font-size:11.2px;transform:scaleX(0.902);transform-origin:0 50%">OK</div>
<div class="t" style="left:1036.6px;top:558px;font-size:11.2px;transform:scaleX(0.93);transform-origin:0 50%">Отмена</div>
</body></html>
